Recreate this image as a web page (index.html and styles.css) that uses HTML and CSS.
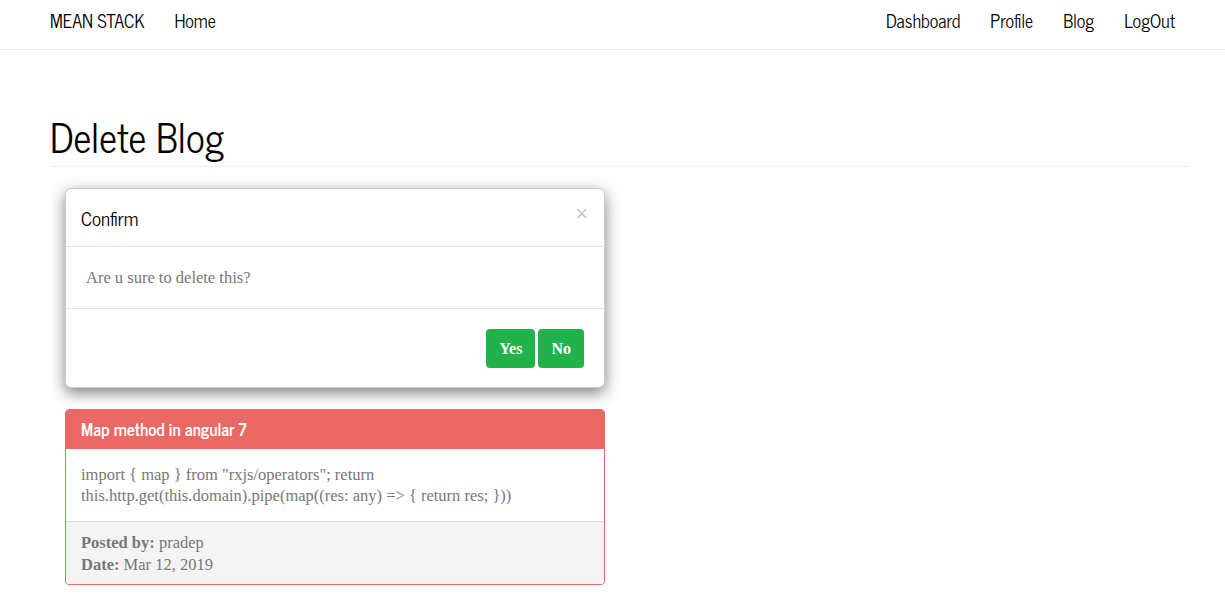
FILE: index.html
```html
<!DOCTYPE html>
<html lang="en">
<head>
  <meta charset="UTF-8">
  <meta name="viewport" content="width=device-width, initial-scale=1.0">
  <title>MEAN STACK - Delete Blog</title>
  <link rel="stylesheet" href="styles.css">
</head>
<body>
  <!-- Top navigation -->
  <nav class="navbar">
    <div class="nav-left">
      <a class="brand">MEAN STACK</a>
      <a class="nav-link">Home</a>
    </div>
    <div class="nav-right">
      <a class="nav-link">Dashboard</a>
      <a class="nav-link">Profile</a>
      <a class="nav-link">Blog</a>
      <a class="nav-link">LogOut</a>
    </div>
  </nav>

  <div class="container">
    <h1 class="page-header">Delete Blog</h1>

    <div class="col-half">
      <!-- Confirm dialog -->
      <div class="modal">
        <div class="modal-header">
          <h4 class="modal-title">Confirm</h4>
          <button class="close">×</button>
        </div>
        <div class="modal-body">
          <p>Are u sure to delete this?</p>
        </div>
        <div class="modal-footer">
          <button class="btn btn-success">Yes</button>
          <button class="btn btn-success">No</button>
        </div>
      </div>

      <!-- Blog panel -->
      <div class="panel">
        <div class="panel-heading">Map method in angular 7</div>
        <div class="panel-body">
          import { map } from "rxjs/operators"; return this.http.get(this.domain).pipe(map((res: any) =&gt; { return res; }))
        </div>
        <div class="panel-footer">
          <div><strong>Posted by:</strong> pradep</div>
          <div><strong>Date:</strong> Mar 12, 2019</div>
        </div>
      </div>
    </div>
  </div>
</body>
</html>
```

FILE: styles.css
```css
:root {
  --primary: #eb6864;
  --success: #22b24c;
  --text: #777777;
  --heading: #000000;
}

body {
  margin: 0;
  font-family: Georgia, "Liberation Serif", serif;
  font-size: 16.5px;
  line-height: 1.42857;
  color: var(--text);
  background: #ffffff;
}

.navbar,
.page-header,
.modal-title,
.panel-heading {
  font-family: "News Cycle", "DejaVu Sans Condensed", "DejaVu Sans", sans-serif;
  font-stretch: condensed;
}

/* Navbar */
.navbar {
  display: flex;
  justify-content: space-between;
  align-items: center;
  height: 42px;
  padding: 0 35px 7px;
  border-bottom: 1px solid #ececec;
  font-size: 18px;
  color: #000;
}

.nav-left,
.nav-right {
  display: flex;
  align-items: center;
}

.brand {
  padding: 0 15px;
}

.nav-link {
  padding: 0 15px;
  cursor: pointer;
}

/* Page */
.container {
  padding: 0 35px 0 50px;
}

.page-header {
  margin: 0;
  padding: 64px 0 9px;
  font-size: 39.5px;
  font-weight: 400;
  line-height: 1.1;
  color: var(--heading);
  border-bottom: 1px solid #eeeeee;
}

.col-half {
  width: 540px;
  padding: 21px 15px 0;
}

/* Modal */
.modal {
  background: #fff;
  border: 1px solid rgba(0, 0, 0, 0.2);
  border-radius: 6px;
  box-shadow: 0 5px 15px rgba(0, 0, 0, 0.5);
  margin-bottom: 21px;
}

.modal-header {
  display: flex;
  justify-content: space-between;
  align-items: flex-start;
  padding: 15px;
  border-bottom: 1px solid #e5e5e5;
}

.modal-title {
  margin: 0;
  font-size: 19px;
  font-weight: 400;
  line-height: 27px;
  color: var(--heading);
}

.close {
  background: none;
  border: none;
  padding: 0;
  margin-right: 1px;
  font-size: 22px;
  line-height: 20px;
  color: #c8c8c8;
  cursor: pointer;
}

.modal-body {
  padding: 20px;
}

.modal-body p {
  margin: 0;
  line-height: 21px;
}

.modal-footer {
  display: flex;
  justify-content: flex-end;
  gap: 3px;
  padding: 20px 20px 19px;
  border-top: 1px solid #e5e5e5;
}

.btn {
  font-family: Georgia, "Liberation Serif", serif;
  font-size: 16px;
  font-weight: 700;
  color: #fff;
  border: none;
  border-radius: 4px;
  padding: 9px 13px;
  line-height: 21px;
  cursor: pointer;
}

.btn-success {
  background-color: var(--success);
}

/* Panel */
.panel {
  border: 1px solid var(--primary);
  border-radius: 4px;
  overflow: hidden;
}

.panel-heading {
  background: var(--primary);
  color: #fff;
  font-size: 17px;
  font-weight: 700;
  padding: 9px 15px;
  line-height: 21px;
}

.panel-body {
  padding: 15px;
  line-height: 21px;
}

.panel-footer {
  background: #f4f4f4;
  border-top: 1px solid #dddddd;
  padding: 10px 15px 8px;
  line-height: 22px;
}

.panel-footer strong {
  font-weight: 700;
}
```
